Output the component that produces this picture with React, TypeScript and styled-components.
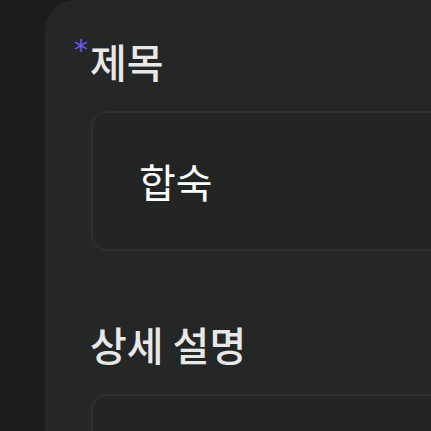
import styled, { createGlobalStyle } from "styled-components";

const GlobalStyle = createGlobalStyle`
    html, body {
        margin: 0;
        padding: 0;
        background-color: #1b1c1c;
        overflow: hidden;
        font-family: "Noto Sans CJK KR", "Noto Sans", sans-serif;
    }
`;

const Page = styled.div`
    width: 431px;
    height: 431px;
    padding-left: 45px;
    box-sizing: border-box;
    overflow: hidden;
`;

const Card = styled.div`
    width: 560px;
    min-height: 520px;
    background-color: #252626;
    border-top-left-radius: 30px;
    padding: 34px 0 0 45px;
    box-sizing: border-box;
    display: flex;
    flex-direction: column;
`;

const Field = styled.div`
    display: flex;
    flex-direction: column;
    margin-bottom: 66px;
`;

const Label = styled.label`
    position: relative;
    font-size: 40px;
    line-height: 54px;
    color: #e8e8e8;
    font-weight: 500;
    margin-bottom: 23px;
`;

const Required = styled.span`
    position: absolute;
    left: -16px;
    top: 3px;
    font-family: "DejaVu Sans", sans-serif;
    font-size: 28px;
    line-height: 1;
    color: #6a5cf2;
`;

const InputBox = styled.div<{ tall?: boolean }>`
    height: ${(props) => (props.tall ? "200px" : "140px")};
    margin-left: 1px;
    border: 2px solid #2e2f2f;
    border-radius: 16px;
    background-color: #232424;
    box-sizing: border-box;
    display: flex;
    align-items: center;
    padding-left: 46px;
    font-size: 40px;
    color: #ffffff;
`;

export default function App() {
    return (
        <>
            <GlobalStyle />
            <Page>
                <Card>
                    <Field>
                        <Label>
                            <Required>*</Required>제목
                        </Label>
                        <InputBox>합숙</InputBox>
                    </Field>
                    <Field>
                        <Label>상세 설명</Label>
                        <InputBox tall />
                    </Field>
                </Card>
            </Page>
        </>
    );
}
